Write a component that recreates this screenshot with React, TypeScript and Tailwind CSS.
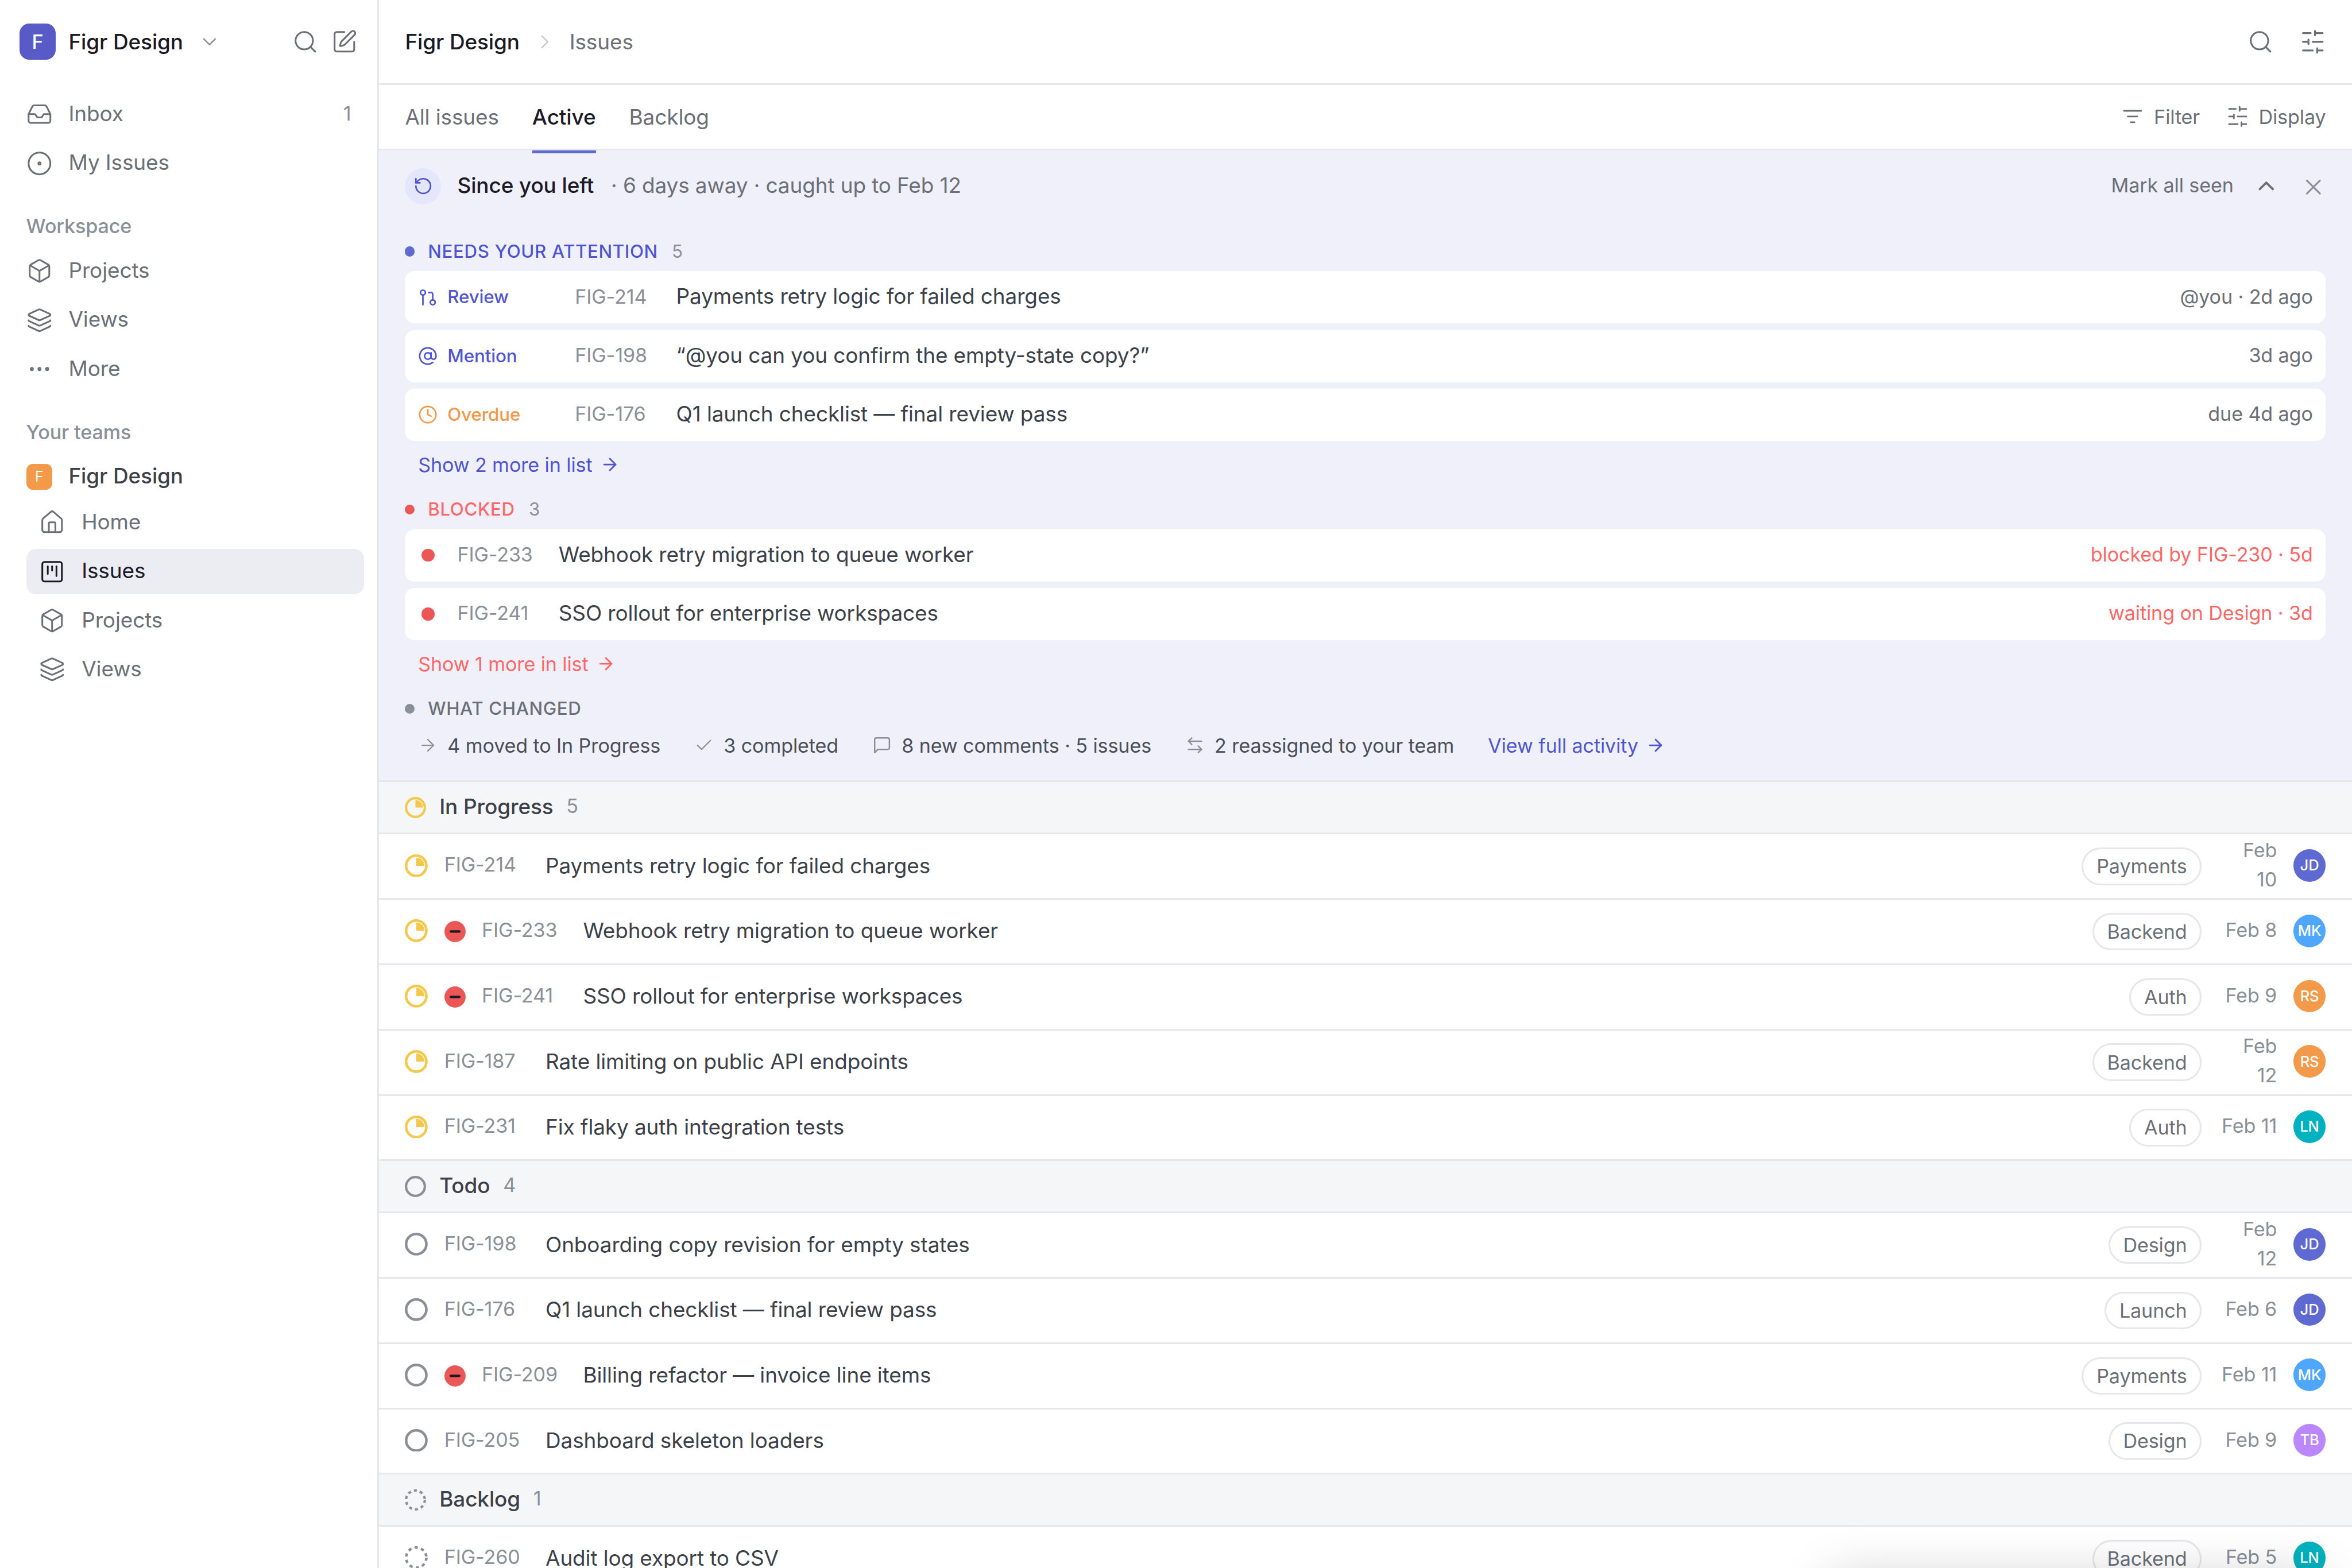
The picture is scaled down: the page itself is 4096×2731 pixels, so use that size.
import type { ReactNode } from "react";
import {
  ArrowLeftRight,
  ArrowRight,
  AtSign,
  Box,
  Check,
  ChevronDown,
  ChevronRight,
  ChevronUp,
  CircleDot,
  Clock,
  Ellipsis,
  GitPullRequest,
  House,
  Inbox,
  Layers,
  RotateCcw,
  Search,
  SquareKanban,
  SquarePen,
  X,
} from "lucide-react";
import clsx from "clsx";

type Status = "progress" | "todo" | "backlog";

type Issue = {
  id: string;
  title: string;
  label: string;
  date: string;
  who: keyof typeof AVATARS;
  blocked?: boolean;
};

const AVATARS = {
  JD: "bg-[#5e6ad2]",
  MK: "bg-[#4ea7fc]",
  RS: "bg-[#f2994a]",
  LN: "bg-[#00b2bf]",
  TB: "bg-[#bb87fc]",
};

const GROUPS: { status: Status; name: string; count: number; issues: Issue[] }[] = [
  {
    status: "progress",
    name: "In Progress",
    count: 5,
    issues: [
      { id: "FIG-214", title: "Payments retry logic for failed charges", label: "Payments", date: "Feb 10", who: "JD" },
      { id: "FIG-233", title: "Webhook retry migration to queue worker", label: "Backend", date: "Feb 8", who: "MK", blocked: true },
      { id: "FIG-241", title: "SSO rollout for enterprise workspaces", label: "Auth", date: "Feb 9", who: "RS", blocked: true },
      { id: "FIG-187", title: "Rate limiting on public API endpoints", label: "Backend", date: "Feb 12", who: "RS" },
      { id: "FIG-231", title: "Fix flaky auth integration tests", label: "Auth", date: "Feb 11", who: "LN" },
    ],
  },
  {
    status: "todo",
    name: "Todo",
    count: 4,
    issues: [
      { id: "FIG-198", title: "Onboarding copy revision for empty states", label: "Design", date: "Feb 12", who: "JD" },
      { id: "FIG-176", title: "Q1 launch checklist — final review pass", label: "Launch", date: "Feb 6", who: "JD" },
      { id: "FIG-209", title: "Billing refactor — invoice line items", label: "Payments", date: "Feb 11", who: "MK", blocked: true },
      { id: "FIG-205", title: "Dashboard skeleton loaders", label: "Design", date: "Feb 9", who: "TB" },
    ],
  },
  {
    status: "backlog",
    name: "Backlog",
    count: 1,
    issues: [{ id: "FIG-260", title: "Audit log export to CSV", label: "Backend", date: "Feb 5", who: "LN" }],
  },
];

export default function App() {
  return (
    <div className="[zoom:2.84444] relative flex h-[960px] w-[1440px] overflow-hidden bg-white font-['Inter',sans-serif] text-[13px] leading-[1.5] tracking-[-0.045px] text-[#3c4149]">
      <Sidebar />
      <main className="flex min-w-0 flex-1 flex-col">
        <TopBar />
        <Tabs />
        <CatchUp />
        {GROUPS.map((g) => (
          <section key={g.status} className="shrink-0">
            <div className="flex h-8 items-center gap-2 border-b-[1.06px] border-[#e6e6eb] bg-[#f5f6f8] px-4">
              <StatusIcon status={g.status} size={13} />
              <span className="-mt-px font-medium">{g.name}</span>
              <span className="-mt-0.5 text-[12px] text-[#8a8f98]">{g.count}</span>
            </div>
            {g.issues.map((issue) => (
              <IssueRow key={issue.id} issue={issue} status={g.status} />
            ))}
          </section>
        ))}
      </main>

      <div className="absolute right-4 top-[966px] h-12 w-[304px] rounded-lg bg-white shadow-[0_0_32px_rgba(0,0,0,0.2)]" />
    </div>
  );
}

/* Sidebar */

function Sidebar() {
  return (
    <aside className="flex w-[232px] shrink-0 flex-col border-r-[1.06px] border-[#e6e6eb]">
      <div className="flex h-[51px] items-center px-3">
        <span className="flex size-[22px] items-center justify-center rounded-md bg-[#575ac7] text-[12px] font-medium text-white">
          F
        </span>
        <span className="ml-2 font-medium text-[#1b1a25]">Figr Design</span>
        <ChevronDown size={14} strokeWidth={1.5} className="ml-[9px] text-[#8a8f98]" />
        <div className="ml-auto flex gap-2 text-[#6b6f76]">
          <Search size={16} strokeWidth={1.6} />
          <SquarePen size={16} strokeWidth={1.6} />
        </div>
      </div>

      <nav className="flex flex-col gap-0.5 px-2 pt-[5px]">
        <NavItem icon={<Inbox size={16} strokeWidth={1.6} />} label="Inbox" count={1} />
        <NavItem icon={<CircleDot size={16} strokeWidth={1.6} />} label="My Issues" />
      </nav>

      <NavHeading>Workspace</NavHeading>
      <nav className="flex flex-col gap-0.5 px-2">
        <NavItem icon={<Box size={16} strokeWidth={1.6} />} label="Projects" />
        <NavItem icon={<Layers size={16} strokeWidth={1.6} />} label="Views" />
        <NavItem icon={<Ellipsis size={16} strokeWidth={1.6} />} label="More" />
      </nav>

      <NavHeading>Your teams</NavHeading>
      <div className="flex h-[28px] items-center gap-2.5 px-4 font-medium">
        <span className="flex size-4 items-center justify-center rounded bg-[#f2994a] text-[9px] font-normal text-white">
          F
        </span>
        <span className="-mt-[1.5px]">Figr Design</span>
      </div>
      <nav className="flex flex-col gap-0.5 pl-4 pr-2">
        <NavItem icon={<House size={16} strokeWidth={1.6} />} label="Home" />
        <NavItem icon={<SquareKanban size={16} strokeWidth={1.6} />} label="Issues" active />
        <NavItem icon={<Box size={16} strokeWidth={1.6} />} label="Projects" />
        <NavItem icon={<Layers size={16} strokeWidth={1.6} />} label="Views" />
      </nav>
    </aside>
  );
}

function NavHeading({ children }: { children: ReactNode }) {
  return <div className="mt-[15.5px] flex h-[22.5px] items-start px-4 text-[12px] font-medium leading-[18px] text-[#8a8f98]">{children}</div>;
}

function NavItem({ icon, label, count, active }: { icon: ReactNode; label: string; count?: number; active?: boolean }) {
  return (
    <div
      className={clsx(
        "flex h-7 items-center gap-2.5 rounded-md px-2",
        active ? "bg-[#ecedf3] text-[#1b1a25]" : "text-[#6b6f76]",
      )}
    >
      {icon}
      <span className="-mt-px">{label}</span>
      {count !== undefined && <span className="-mt-px ml-auto text-[12px] text-[#8a8f98]">{count}</span>}
    </div>
  );
}

/* Header and tabs */

function TopBar() {
  return (
    <header className="flex h-[52px] shrink-0 items-center gap-2 border-b-[1.06px] border-[#e6e6eb] px-4">
      <span className="font-medium text-[#1b1a25]">Figr Design</span>
      <ChevronRight size={14} strokeWidth={1.5} className="ml-[0.5px] text-[#c5c7d3]" />
      <span className="text-[#6b6f76]">Issues</span>
      <div className="ml-auto flex gap-4 text-[#6b6f76]">
        <Search size={16} strokeWidth={1.6} />
        <SlidersIcon size={16} />
      </div>
    </header>
  );
}

function Tabs() {
  return (
    <div className="flex h-10 shrink-0 items-stretch gap-[20.4px] border-b-[1.06px] border-[#e6e6eb] px-4 text-[#6b6f76]">
      <span className="flex items-center">All issues</span>
      <span className="relative flex items-center font-medium text-[#1b1a25]">
        Active
        <span className="absolute inset-x-0 -bottom-[3px] h-0.5 bg-[#5e6ad2]" />
      </span>
      <span className="flex items-center">Backlog</span>
      <div className="ml-auto flex items-center gap-4 text-[12px]">
        <span className="flex items-center gap-1.5">
          <FilterIcon />
          Filter
        </span>
        <span className="flex items-center gap-1.5">
          <SlidersIcon size={14} />
          Display
        </span>
      </div>
    </div>
  );
}

/* "Since you left" panel */

function CatchUp() {
  return (
    <section className="h-[387px] shrink-0 border-b-[1.06px] border-[#e6e6eb] bg-[#f0f0fb] px-4">
      <div className="flex h-11 items-center">
        <span className="flex size-[22px] items-center justify-center rounded-full bg-[#e4e6fb] text-[#4f55d1]">
          <RotateCcw size={12} strokeWidth={1.9} />
        </span>
        <span className="-mt-px ml-2.5 font-medium text-[#1b1a25]">Since you left</span>
        <span className="-mt-px ml-[10.5px] text-[#6b6f76]">· 6 days away · caught up to Feb 12</span>
        <div className="ml-auto flex items-center text-[#6b6f76]">
          <span className="-mt-px mr-3 text-[12px]">Mark all seen</span>
          <ChevronUp size={16} strokeWidth={2} className="mr-[13px]" />
          <X size={16} strokeWidth={1.6} className="-mr-[0.5px] mt-px text-[#8a8f98]" />
        </div>
      </div>

      <div className="h-[168px] pt-2.5">
        <PanelHeading dot="bg-[#5e6ad2]" text="text-[#4f55d1]" count={5}>
          Needs your attention
        </PanelHeading>
        <div className="flex flex-col gap-1">
          <AttentionCard tone="text-[#4f55d1]" icon={<GitPullRequest size={12} strokeWidth={1.9} />} kind="Review" id="FIG-214" title="Payments retry logic for failed charges" meta="@you · 2d ago" />
          <AttentionCard tone="text-[#4f55d1]" icon={<AtSign size={12} strokeWidth={1.9} />} kind="Mention" id="FIG-198" title="“@you can you confirm the empty-state copy?”" meta="3d ago" />
          <AttentionCard tone="text-[#f2994a]" icon={<Clock size={12} strokeWidth={1.9} />} kind="Overdue" id="FIG-176" title="Q1 launch checklist — final review pass" meta="due 4d ago" />
        </div>
        <MoreLink className="mt-[5.5px] pl-2 text-[#4f55d1]">Show 2 more in list</MoreLink>
      </div>

      <div className="h-[122px]">
        <PanelHeading dot="bg-[#eb5757]" text="text-[#ff6666]" count={3}>
          Blocked
        </PanelHeading>
        <div className="flex flex-col gap-1">
          <BlockedCard id="FIG-233" title="Webhook retry migration to queue worker" meta="blocked by FIG-230 · 5d" />
          <BlockedCard id="FIG-241" title="SSO rollout for enterprise workspaces" meta="waiting on Design · 3d" />
        </div>
        <MoreLink className="mt-[5.5px] pl-2 text-[#ff6666]">Show 1 more in list</MoreLink>
      </div>

      <PanelHeading dot="bg-[#8a8f98]" text="text-[#6b6f76]">
        What changed
      </PanelHeading>
      <div className="flex h-[21px] items-center gap-[20.7px] pl-2 text-[12px] text-[#4a4f57]">
        <Change icon={<ArrowRight size={12} strokeWidth={1.6} />}>4 moved to In Progress</Change>
        <Change icon={<Check size={12} strokeWidth={1.6} />}>3 completed</Change>
        <Change icon={<CommentIcon />}>8 new comments · 5 issues</Change>
        <Change icon={<ArrowLeftRight size={12} strokeWidth={1.75} />}>2 reassigned to your team</Change>
        <MoreLink className="text-[#4f55d1]">View full activity</MoreLink>
      </div>
    </section>
  );
}

function PanelHeading({ dot, text, count, children }: { dot: string; text: string; count?: number; children: ReactNode }) {
  return (
    <div className="mb-1 flex h-4 items-center gap-2 text-[11px]">
      <span className={clsx("size-1.5 rounded-full", dot)} />
      <span className={clsx("font-medium uppercase tracking-[0.02em]", text)}>{children}</span>
      {count !== undefined && <span className="ml-[0.5px] text-[#8a8f98]">{count}</span>}
    </div>
  );
}

function AttentionCard({ tone, icon, kind, id, title, meta }: { tone: string; icon: ReactNode; kind: string; id: string; title: string; meta: string }) {
  return (
    <div className="flex h-8 items-center rounded-md bg-white px-2">
      <span className={clsx("flex w-24 items-center gap-1.5 text-[11px] font-medium", tone)}>
        {icon}
        {kind}
      </span>
      <span className="-mt-px w-[62px] text-[12px] text-[#8a8f98]">{id}</span>
      <span className="-mt-px">{title}</span>
      <span className="-mt-px ml-auto text-[12px] text-[#6b6f76]">{meta}</span>
    </div>
  );
}

function BlockedCard({ id, title, meta }: { id: string; title: string; meta: string }) {
  return (
    <div className="flex h-8 items-center rounded-md bg-white px-2">
      <span className="ml-0.5 mr-3.5 size-2 rounded-full bg-[#eb5757]" />
      <span className="-mt-px w-[62px] text-[12px] text-[#8a8f98]">{id}</span>
      <span className="-mt-px">{title}</span>
      <span className="-mt-px ml-auto text-[12px] text-[#ff6666]">{meta}</span>
    </div>
  );
}

function MoreLink({ className, children }: { className?: string; children: ReactNode }) {
  return (
    <div className={clsx("flex items-center gap-[4.6px] text-[12px]", className)}>
      {children}
      <ArrowRight size={12} strokeWidth={2} />
    </div>
  );
}

function Change({ icon, children }: { icon: ReactNode; children: ReactNode }) {
  return (
    <span className="flex items-center gap-1.5">
      <span className="text-[#8a8f98]">{icon}</span>
      {children}
    </span>
  );
}

/* Issue list */

function IssueRow({ issue, status }: { issue: Issue; status: Status }) {
  return (
    <div className="flex h-10 items-center gap-2.5 border-b-[1.06px] border-[#e6e6eb] px-4 pb-px">
      <StatusIcon status={status} size={14} />
      {issue.blocked && <BlockedIcon />}
      <span className="-mt-px w-[52px] shrink-0 text-[12px] text-[#8a8f98]">{issue.id}</span>
      <span className="flex-1">{issue.title}</span>
      <span className="mt-px flex h-[23px] items-center rounded-full border-[1.06px] border-[#e6e6eb] px-2 text-[12px] text-[#6b6f76]">
        {issue.label}
      </span>
      <span className="-mt-px w-9 text-right text-[12px] leading-[18px] text-[#8a8f98]">{issue.date}</span>
      <span className={clsx("flex size-5 items-center justify-center rounded-full text-[9px] font-medium text-white", AVATARS[issue.who])}>
        {issue.who}
      </span>
    </div>
  );
}

function StatusIcon({ status, size }: { status: Status; size: number }) {
  return (
    <svg width={size} height={size} viewBox="0 0 14 14" fill="none" className="shrink-0">
      {status === "progress" && (
        <>
          <circle cx="7" cy="7" r="6.2" stroke="#f2c94c" strokeWidth="1.6" />
          <path d="M7 7V2a5 5 0 0 1 5 5z" fill="#f2c94c" />
        </>
      )}
      {status === "todo" && <circle cx="7" cy="7" r="6.2" stroke="#8a8f98" strokeWidth="1.6" />}
      {status === "backlog" && (
        <circle cx="7" cy="7" r="6.2" stroke="#8a8f98" strokeWidth="1.6" strokeDasharray="2 2" />
      )}
    </svg>
  );
}

function BlockedIcon() {
  return (
    <svg width="13" height="13" viewBox="0 0 13 13" className="mt-px shrink-0">
      <circle cx="6.5" cy="6.5" r="6.5" fill="#eb5757" />
      <path d="M3.9 6.5h5.2" stroke="#1b1a25" strokeWidth="1.5" strokeLinecap="round" />
    </svg>
  );
}

function SlidersIcon({ size }: { size: number }) {
  return (
    <svg width={size} height={size} viewBox="0 0 24 24" fill="none" stroke="currentColor" strokeWidth="1.75" strokeLinecap="round">
      <path d="M21 4h-7M10 4H3M21 12h-9M8 12H3M21 20h-5M12 20H3M14 2v4M8 10v4M16 18v4" />
    </svg>
  );
}

function FilterIcon() {
  return (
    <svg width="14" height="14" viewBox="0 0 24 24" fill="none" stroke="currentColor" strokeWidth="1.75" strokeLinecap="round">
      <path d="M3 6h18M7 12h10M10 18h4" />
    </svg>
  );
}

function CommentIcon() {
  return (
    <svg width="12" height="12" viewBox="0 0 24 24" fill="none" stroke="currentColor" strokeWidth="1.75" strokeLinecap="round" strokeLinejoin="round">
      <path d="M21 15a2 2 0 0 1-2 2H7l-4 4V5a2 2 0 0 1 2-2h14a2 2 0 0 1 2 2z" />
    </svg>
  );
}
